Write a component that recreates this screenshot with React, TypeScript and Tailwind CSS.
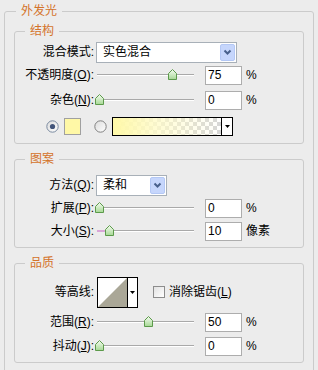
import React from "react";

const font = "font-['Liberation_Sans','Noto_Sans_CJK_SC',sans-serif]";

// little green "house" slider thumb
const Thumb = () => (
  <svg width="9" height="11" viewBox="0 0 9 11">
    <defs>
      <linearGradient id="thumbFill" x1="0" y1="0" x2="0" y2="1">
        <stop offset="0" stopColor="#f6fcf2" />
        <stop offset="1" stopColor="#a6d894" />
      </linearGradient>
    </defs>
    <path d="M0.5 4.5 L4.5 0.5 L8.5 4.5 V10.5 H0.5 Z" fill="url(#thumbFill)" stroke="#5c9a4b" />
  </svg>
);

const Slider = ({ value, trail }: { value: number; trail?: boolean }) => (
  <div className="relative h-[22px] w-[104px] shrink-0">
    <div className="absolute left-[3px] right-[4px] top-[10px] h-[2px] border-t border-[#a9a9a9] bg-white" />
    {trail && <div className="absolute left-[3px] top-[10px] h-[2px] w-[9px] bg-[#d9a6d8]" />}
    <div className="absolute top-[5px]" style={{ left: 1 + value * 0.97 }}>
      <Thumb />
    </div>
  </div>
);

const NumBox = ({ v }: { v: string }) => (
  <div className="ml-[7px] flex h-[19px] w-[37px] shrink-0 items-center border border-[#adadad] bg-white pl-[2px] text-[12px]">
    {v}
  </div>
);

const Label = ({ children }: { children: React.ReactNode }) => (
  <div className="w-[79px] shrink-0 text-right whitespace-nowrap">{children}</div>
);

const Chevron = () => (
  <div className="flex h-[17px] w-[15px] items-center justify-center rounded-[2px] border border-[#b4c8f5] bg-[#c6d6fc]">
    <svg width="9" height="7" viewBox="0 0 9 7">
      <path d="M1.5 1.5 L4.5 4.5 L7.5 1.5" fill="none" stroke="#48608c" strokeWidth="2" />
    </svg>
  </div>
);

const Combo = ({ text, w }: { text: string; w: string }) => (
  <div className={`ml-[2px] flex h-[21px] items-center justify-between border border-[#a8b0b8] bg-white pl-[6px] pr-[1px] ${w}`}>
    <span>{text}</span>
    <Chevron />
  </div>
);

const DropTri = () => (
  <svg width="5" height="3" viewBox="0 0 5 3">
    <path d="M0 0 H5 L2.5 3 Z" fill="#000" />
  </svg>
);

const Radio = ({ on }: { on?: boolean }) => (
  <svg width="13" height="13" viewBox="0 0 13 13">
    <defs>
      <linearGradient id="radioFill" x1="0" y1="0" x2="1" y2="1">
        <stop offset="0" stopColor="#dcdcdc" />
        <stop offset="1" stopColor="#ffffff" />
      </linearGradient>
    </defs>
    <circle cx="6.5" cy="6.5" r="5.7" fill="url(#radioFill)" stroke={on ? "#7a8aa0" : "#808080"} />
    {on && <circle cx="6.5" cy="6.5" r="2.6" fill="#43557a" />}
  </svg>
);

const Row = ({ className, children }: { className: string; children: React.ReactNode }) => (
  <div className={`flex h-[22px] items-center ${className}`}>{children}</div>
);

const Group = ({ title, className, children }: { title: string; className: string; children: React.ReactNode }) => (
  <fieldset className={`rounded-[3px] border border-[#cbcbcb] ${className}`}>
    <legend className="ml-[10px] px-[5px] text-[12px] leading-[14px] text-[#d4732a]">{title}</legend>
    {children}
  </fieldset>
);

export default function App() {
  return (
    <div className={`h-[370px] w-[318px] overflow-hidden bg-[#ececec] pt-[4px] pl-[4px] text-[12px] leading-[14px] text-black ${font}`}>
      <fieldset className="w-[310px] rounded-[3px] border border-[#cbcbcb] px-[9px] pb-[24px]">
        <legend className="ml-[2px] px-[5px] text-[12px] leading-[14px] text-[#d4732a]">外发光</legend>

        {/* 结构 */}
        <Group title="结构" className="mt-[6px] pb-[6px]">
          <Row className="mt-[3px]">
            <Label>混合模式:</Label>
            <Combo text="实色混合" w="w-[141px]" />
          </Row>
          <Row className="mt-[1px]">
            <Label>
              不透明度(<u>O</u>):
            </Label>
            <Slider value={75} />
            <NumBox v="75" />
            <span className="ml-[4px]">%</span>
          </Row>
          <Row className="mt-[3px]">
            <Label>
              杂色(<u>N</u>):
            </Label>
            <Slider value={0} />
            <NumBox v="0" />
            <span className="ml-[4px]">%</span>
          </Row>
          <Row className="mt-[4px]">
            <div className="ml-[31px] flex">
              <Radio on />
            </div>
            <div className="ml-[5px] h-[17px] w-[17px] border border-[#a0a0a0] bg-[#fff8a6]" />
            <div className="ml-[13px] flex">
              <Radio />
            </div>
            <div className="ml-[5px] flex h-[19px] w-[121px] border border-black">
              <div className="h-full flex-1 bg-[repeating-conic-gradient(#d6d6d6_0%_25%,#ffffff_0%_50%)] bg-[length:8px_8px]">
                <div className="h-full w-full bg-linear-to-r from-[#fff9a8] via-[#fffbc8cc] via-40% to-[#ffffff00]" />
              </div>
              <div className="flex w-[11px] items-center justify-center border-l border-black bg-white">
                <DropTri />
              </div>
            </div>
          </Row>
        </Group>

        {/* 图案 */}
        <Group title="图案" className="mt-[8px] pb-[5px]">
          <Row className="mt-[8px]">
            <Label>
              方法(<u>Q</u>):
            </Label>
            <Combo text="柔和" w="w-[71px]" />
          </Row>
          <Row className="mt-[1px]">
            <Label>
              扩展(<u>P</u>):
            </Label>
            <Slider value={0} />
            <NumBox v="0" />
            <span className="ml-[4px]">%</span>
          </Row>
          <Row className="mt-[1px]">
            <Label>
              大小(<u>S</u>):
            </Label>
            <Slider value={10} trail />
            <NumBox v="10" />
            <span className="ml-[4px]">像素</span>
          </Row>
        </Group>

        {/* 品质 */}
        <Group title="品质" className="mt-[8px] pb-[5px]">
          <div className="mt-[6px] flex h-[32px] items-center">
            <Label>等高线:</Label>
            <div className="ml-[3px] flex h-[31px] w-[41px] border border-black bg-white">
              <svg width="29" height="29" viewBox="0 0 29 29" className="shrink-0">
                <rect width="29" height="29" fill="#ffffff" />
                <path d="M0 29 L29 0 V29 Z" fill="#aaa797" />
              </svg>
              <div className="flex flex-1 items-center justify-center border-l border-black">
                <DropTri />
              </div>
            </div>
            <div className="ml-[15px] h-[12px] w-[12px] border border-[#8c8c8c] bg-linear-to-br from-[#e2e2e2] to-white" />
            <span className="ml-[4px]">
              消除锯齿(<u>L</u>)
            </span>
          </div>
          <Row className="mt-[3px]">
            <Label>
              范围(<u>R</u>):
            </Label>
            <Slider value={50} />
            <NumBox v="50" />
            <span className="ml-[4px]">%</span>
          </Row>
          <Row className="mt-[2px]">
            <Label>
              抖动(<u>J</u>):
            </Label>
            <Slider value={0} />
            <NumBox v="0" />
            <span className="ml-[4px]">%</span>
          </Row>
        </Group>
      </fieldset>
    </div>
  );
}
